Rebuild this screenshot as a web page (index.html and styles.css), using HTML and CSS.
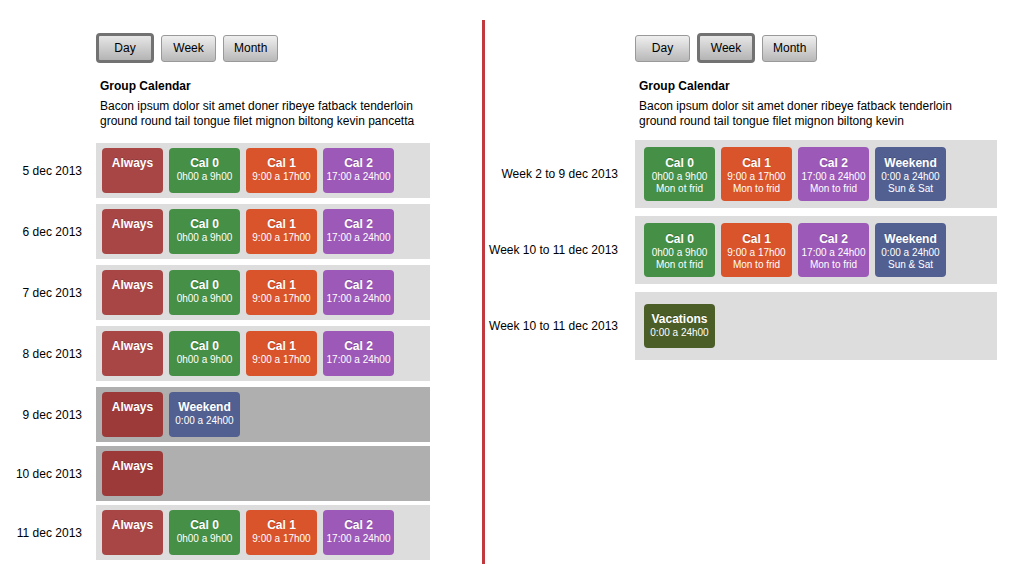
FILE: index.html
```html
<!DOCTYPE html>
<html lang="en">
<head>
    <meta charset="UTF-8">
    <meta name="viewport" content="width=device-width, initial-scale=1.0">
    <title>Group Calendar</title>
    <link rel="stylesheet" href="styles.css">
</head>
<body>
    <div class="page">
        <div class="panel panel-day">
            <div class="top">
                <div class="toolbar">
                    <button class="active">Day</button>
                    <button>Week</button>
                    <button>Month</button>
                </div>
                <div class="header">
                    <h1>Group Calendar</h1>
                    <p>Bacon ipsum dolor sit amet doner ribeye fatback tenderloin ground round tail tongue filet mignon biltong kevin pancetta</p>
                </div>
            </div>

            <div class="row">
                <div class="label">5 dec 2013</div>
                <div class="bar">
                    <div class="tag always"><b>Always</b></div>
                    <div class="tag cal0"><b>Cal 0</b><span>0h00 a 9h00</span></div>
                    <div class="tag cal1"><b>Cal 1</b><span>9:00 a 17h00</span></div>
                    <div class="tag cal2"><b>Cal 2</b><span>17:00 a 24h00</span></div>
                </div>
            </div>
            <div class="row">
                <div class="label">6 dec 2013</div>
                <div class="bar">
                    <div class="tag always"><b>Always</b></div>
                    <div class="tag cal0"><b>Cal 0</b><span>0h00 a 9h00</span></div>
                    <div class="tag cal1"><b>Cal 1</b><span>9:00 a 17h00</span></div>
                    <div class="tag cal2"><b>Cal 2</b><span>17:00 a 24h00</span></div>
                </div>
            </div>
            <div class="row">
                <div class="label">7 dec 2013</div>
                <div class="bar">
                    <div class="tag always"><b>Always</b></div>
                    <div class="tag cal0"><b>Cal 0</b><span>0h00 a 9h00</span></div>
                    <div class="tag cal1"><b>Cal 1</b><span>9:00 a 17h00</span></div>
                    <div class="tag cal2"><b>Cal 2</b><span>17:00 a 24h00</span></div>
                </div>
            </div>
            <div class="row">
                <div class="label">8 dec 2013</div>
                <div class="bar">
                    <div class="tag always"><b>Always</b></div>
                    <div class="tag cal0"><b>Cal 0</b><span>0h00 a 9h00</span></div>
                    <div class="tag cal1"><b>Cal 1</b><span>9:00 a 17h00</span></div>
                    <div class="tag cal2"><b>Cal 2</b><span>17:00 a 24h00</span></div>
                </div>
            </div>
            <div class="row off">
                <div class="label">9 dec 2013</div>
                <div class="bar">
                    <div class="tag always"><b>Always</b></div>
                    <div class="tag weekend"><b>Weekend</b><span>0:00 a 24h00</span></div>
                </div>
            </div>
            <div class="row off">
                <div class="label">10 dec 2013</div>
                <div class="bar">
                    <div class="tag always"><b>Always</b></div>
                </div>
            </div>
            <div class="row">
                <div class="label">11 dec 2013</div>
                <div class="bar">
                    <div class="tag always"><b>Always</b></div>
                    <div class="tag cal0"><b>Cal 0</b><span>0h00 a 9h00</span></div>
                    <div class="tag cal1"><b>Cal 1</b><span>9:00 a 17h00</span></div>
                    <div class="tag cal2"><b>Cal 2</b><span>17:00 a 24h00</span></div>
                </div>
            </div>
        </div>

        <div class="panel panel-week">
            <div class="top">
                <div class="toolbar">
                    <button>Day</button>
                    <button class="active">Week</button>
                    <button>Month</button>
                </div>
                <div class="header">
                    <h1>Group Calendar</h1>
                    <p>Bacon ipsum dolor sit amet doner ribeye fatback tenderloin ground round tail tongue filet mignon biltong kevin</p>
                </div>
            </div>

            <div class="row">
                <div class="label">Week 2 to 9 dec 2013</div>
                <div class="bar">
                    <div class="tag cal0"><b>Cal 0</b><span>0h00 a 9h00</span><span>Mon ot frid</span></div>
                    <div class="tag cal1"><b>Cal 1</b><span>9:00 a 17h00</span><span>Mon to frid</span></div>
                    <div class="tag cal2"><b>Cal 2</b><span>17:00 a 24h00</span><span>Mon to frid</span></div>
                    <div class="tag weekend"><b>Weekend</b><span>0:00 a 24h00</span><span>Sun &amp; Sat</span></div>
                </div>
            </div>
            <div class="row">
                <div class="label">Week 10 to 11 dec 2013</div>
                <div class="bar">
                    <div class="tag cal0"><b>Cal 0</b><span>0h00 a 9h00</span><span>Mon ot frid</span></div>
                    <div class="tag cal1"><b>Cal 1</b><span>9:00 a 17h00</span><span>Mon to frid</span></div>
                    <div class="tag cal2"><b>Cal 2</b><span>17:00 a 24h00</span><span>Mon to frid</span></div>
                    <div class="tag weekend"><b>Weekend</b><span>0:00 a 24h00</span><span>Sun &amp; Sat</span></div>
                </div>
            </div>
            <div class="row">
                <div class="label">Week 10 to 11 dec 2013</div>
                <div class="bar">
                    <div class="tag vacations short"><b>Vacations</b><span>0:00 a 24h00</span></div>
                </div>
            </div>
        </div>
    </div>
</body>
</html>
```

FILE: styles.css
```css
body {
    margin: 0;
    font-family: 'Liberation Sans', Arial, Helvetica, sans-serif;
    font-size: 12px;
    color: #000;
    background: #fff;
}

.page {
    display: flex;
    margin-top: 20px;
    min-height: 544px;
}

.panel {
    padding-top: 13px;
}

.panel-day {
    width: 482px;
    --label-width: 96px;
    --bar-width: 334px;
}

.panel-week {
    border-left: 3px solid #c0393f;
    width: 534px;
    --label-width: 150px;
    --bar-width: 362px;
}

.top {
    margin-left: var(--label-width);
    width: var(--bar-width);
}

.toolbar {
    display: flex;
    align-items: center;
    gap: 7px;
    height: 30px;
}

button {
    box-sizing: border-box;
    font-family: inherit;
    font-size: 12px;
    color: #000;
    height: 27px;
    min-width: 55px;
    padding: 0 10px;
    border: 1px solid #999;
    border-radius: 3px;
    background: linear-gradient(#efefef, #b8b8b8);
    cursor: pointer;
}

button.active {
    height: 30px;
    min-width: 58px;
    border: 3px solid #727272;
    border-radius: 4px;
    background: linear-gradient(#e6e6e6, #b4b4b4);
}

.header {
    padding: 0 4px;
    margin-top: 16px;
}

h1 {
    font-size: 12px;
    line-height: 15px;
    margin: 0 0 5px;
}

p {
    margin: 0;
    line-height: 15px;
    max-width: 330px;
}

.panel-day .header {
    margin-bottom: 14px;
}

.panel-week .header {
    margin-bottom: 11px;
}

.row {
    display: flex;
    align-items: center;
    margin-bottom: 6px;
}

.label {
    width: var(--label-width);
    padding-right: 14px;
    box-sizing: border-box;
    text-align: right;
}

.panel-week .label {
    padding-right: 17px;
}

.bar {
    width: var(--bar-width);
    height: 55px;
    box-sizing: border-box;
    padding: 0 6px;
    display: flex;
    align-items: center;
    gap: 6px;
    background: #dddddd;
}

.row.off {
    margin-bottom: 4px;
}

.row.off .bar {
    background: #afafaf;
}

.panel-week .row {
    margin-bottom: 8px;
}

.panel-week .bar {
    height: 68px;
    padding: 0 9px;
}

.tag {
    width: 71px;
    height: 45px;
    box-sizing: border-box;
    padding-top: 7px;
    border-radius: 4px;
    color: #fff;
    text-align: center;
    display: flex;
    flex-direction: column;
}

.tag b {
    font-size: 12px;
    line-height: 16px;
    text-shadow: 0 -1px 0 rgba(0, 0, 0, 0.2);
}

.tag span {
    font-size: 10px;
    line-height: 12px;
}

.panel-week .tag {
    height: 54px;
    padding-top: 9px;
}

.panel-week .tag b {
    line-height: 15px;
}

.panel-week .tag.short {
    height: 44px;
    padding-top: 7px;
}

.panel-week .tag.short b {
    line-height: 16px;
}

.always {
    width: 61px;
    background: #a84646;
}

.row.off .always {
    background: #9c3a3a;
}

.cal0 {
    background: #468f46;
}

.cal1 {
    background: #d9532b;
}

.cal2 {
    background: #9d59b8;
}

.weekend {
    background: #525f91;
}

.vacations {
    background: #4b5e28;
}
```
